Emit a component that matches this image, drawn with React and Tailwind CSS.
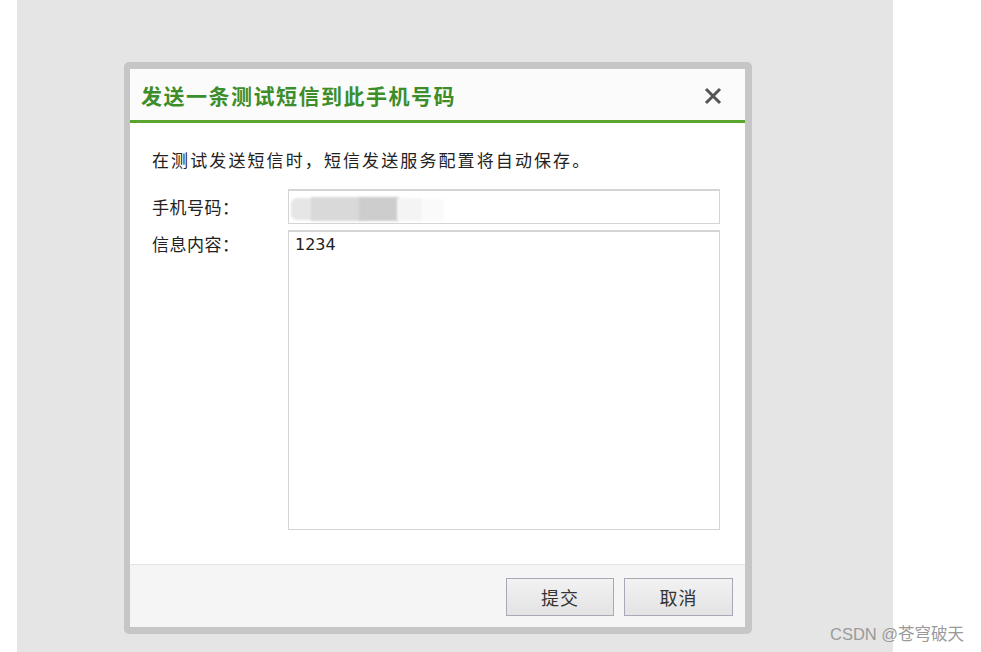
export default function App() {
  const cjk = { fontFamily: '"Noto Sans CJK SC", "Noto Sans", sans-serif' };
  return (
    <div className="relative w-[981px] h-[652px] bg-white flex overflow-hidden" style={cjk}>
      <div className="ml-[17px] w-[876px] h-full bg-[#e5e5e5] pt-[62px] pl-[107px]">
        <div className="w-[628px] h-[572px] border-[7px] border-l-[6px] border-[#c6c6c6] rounded-[5px] bg-white flex flex-col">
          {/* header */}
          <div className="h-[54px] flex items-center justify-between pl-[11px] pr-[22px] pt-[1px] bg-[#fbfbfb] border-b-[3px] border-[#5aa52e]">
            <div className="text-[21px] font-bold text-[#3d8d2a] tracking-[1.5px] leading-none">发送一条测试短信到此手机号码</div>
            <svg width="20" height="20" viewBox="0 0 20 20" className="mt-[1px]">
              <path d="M3 3 L17 17 M17 3 L3 17" stroke="#555" strokeWidth="3" strokeLinecap="butt" />
            </svg>
          </div>
          {/* body */}
          <div className="flex-1 pl-[22px] pr-[25px] pt-[25px]">
            <div className="text-[17px] leading-[24px] text-[#222] tracking-[2.1px]">在测试发送短信时，短信发送服务配置将自动保存。</div>
            <div className="mt-[17px] flex items-center">
              <div className="w-[136px] text-[17px] text-[#222] tracking-[0.5px]">手机号码：</div>
              <div className="relative w-[432px] h-[35px] border border-t-2 border-[#d4d4d4] bg-white">
                <div className="absolute left-[2px] top-[7px] w-[24px] h-[22px] bg-[#e6e6e6] rounded-l-[6px] blur-[1px]" />
                <div className="absolute left-[22px] top-[6px] w-[50px] h-[24px] bg-[#d9d9d9] blur-[1px]" />
                <div className="absolute left-[70px] top-[6px] w-[40px] h-[24px] bg-[#cdcdcd] blur-[1px]" />
                <div className="absolute left-[108px] top-[7px] w-[25px] h-[23px] bg-[#f4f4f4] blur-[1px]" />
                <div className="absolute left-[133px] top-[8px] w-[22px] h-[22px] bg-[#fafafa] blur-[1px]" />
              </div>
            </div>
            <div className="mt-[6px] flex items-start">
              <div className="w-[136px] text-[17px] text-[#222] tracking-[0.5px] pt-[1px]">信息内容：</div>
              <div className="w-[432px] h-[300px] border border-t-2 border-[#d4d4d4] bg-white px-[6px] pt-[1px] text-[#222]" style={{ fontFamily: '"DejaVu Sans", "Noto Sans", sans-serif', fontSize: '16px' }}>
                1234
              </div>
            </div>
          </div>
          {/* footer */}
          <div className="h-[63px] border-t border-[#e4e4e4] bg-[#f5f5f5] flex items-center justify-end gap-[10px] pr-[12px] pt-[2px]">
            <button className="w-[108px] h-[38px] border border-[#a8a8b8] bg-gradient-to-b from-[#f2f2f2] to-[#e3e3e3] text-[18px] text-[#333] tracking-[1px]">提交</button>
            <button className="w-[109px] h-[38px] border border-[#a8a8b8] bg-gradient-to-b from-[#f2f2f2] to-[#e3e3e3] text-[18px] text-[#333] tracking-[1px]">取消</button>
          </div>
        </div>
      </div>
      <div className="absolute left-[830px] top-[622px] text-[16.5px] text-[#9a9a9a]" style={{ fontFamily: '"Liberation Sans", "Noto Sans CJK SC", sans-serif' }}>
        CSDN @苍穹破天
      </div>
    </div>
  );
}
